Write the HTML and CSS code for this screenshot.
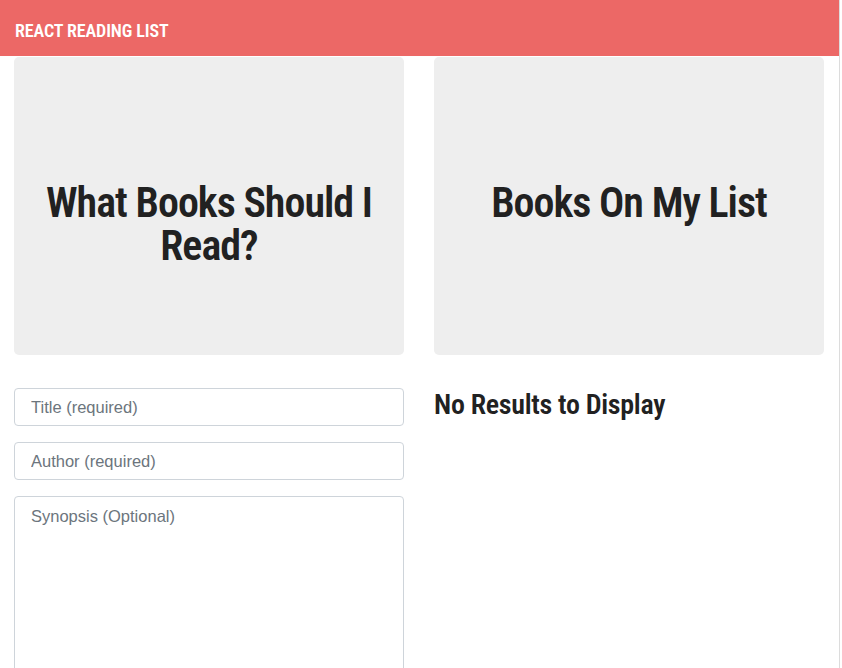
FILE: index.html
```html
<!DOCTYPE html>
<html lang="en">
<head>
<meta charset="utf-8">
<title>React Reading List</title>
<link rel="stylesheet" href="styles.css">
</head>
<body>
<div class="page">
  <header class="navbar">
    <span class="brand">REACT READING LIST</span>
  </header>
  <main class="grid">
    <section class="col">
      <div class="jumbotron">
        <h1 class="jt-title">What Books Should I Read?</h1>
      </div>
      <form class="book-form">
        <input class="field" type="text" placeholder="Title (required)">
        <input class="field" type="text" placeholder="Author (required)">
        <textarea class="field area" placeholder="Synopsis (Optional)"></textarea>
      </form>
    </section>
    <section class="col">
      <div class="jumbotron">
        <h1 class="jt-title">Books On My List</h1>
      </div>
      <h2 class="empty">No Results to Display</h2>
    </section>
  </main>
</div>
</body>
</html>
```
FILE: styles.css
```css
html, body {
  margin: 0;
  padding: 0;
  background: #fff;
}
body {
  overflow: hidden;
  height: 668px;
}
.page {
  width: 839px;
  min-height: 668px;
  border-right: 1px solid #dcdcdc;
  font-family: "Liberation Sans", Arial, sans-serif;
  color: #212529;
}
.navbar {
  height: 56px;
  background: #ec6866;
  display: flex;
  align-items: center;
  padding-left: 15px;
  border-bottom: 1px solid #fff;
}
.brand {
  font-family: "Roboto Condensed", Roboto, sans-serif;
  font-weight: 600;
  font-size: 18px;
  color: #fff;
  letter-spacing: -0.1px;
  padding-top: 4px;
}
.grid {
  display: grid;
  grid-template-columns: 390px 390px;
  column-gap: 30px;
  padding: 0 14px;
}
.col {
  display: flex;
  flex-direction: column;
}
.jumbotron {
  height: 298px;
  box-sizing: border-box;
  background: #eeeeee;
  border-radius: 5px;
  padding: 124px 20px 0;
  margin-bottom: 33px;
}
.jt-title {
  margin: 0;
  text-align: center;
  font-family: "Roboto Condensed", Roboto, sans-serif;
  font-weight: 600;
  font-size: 42px;
  line-height: 43px;
  letter-spacing: -1px;
  color: #212121;
}
.book-form {
  display: flex;
  flex-direction: column;
  gap: 16px;
}
.field {
  box-sizing: border-box;
  width: 390px;
  height: 38px;
  border: 1px solid #ced4da;
  border-radius: 4px;
  padding: 0 16px;
  font-family: "Liberation Sans", Arial, sans-serif;
  font-size: 16.5px;
  color: #495057;
  background: #fff;
  margin: 0;
}
.field::placeholder {
  color: #6c757d;
}
.area {
  height: 200px;
  padding: 10px 16px;
  resize: none;
}
.empty {
  margin: 0;
  font-family: "Roboto Condensed", Roboto, sans-serif;
  font-weight: 600;
  font-size: 28px;
  line-height: 34px;
  letter-spacing: -0.3px;
  color: #212121;
}
```
